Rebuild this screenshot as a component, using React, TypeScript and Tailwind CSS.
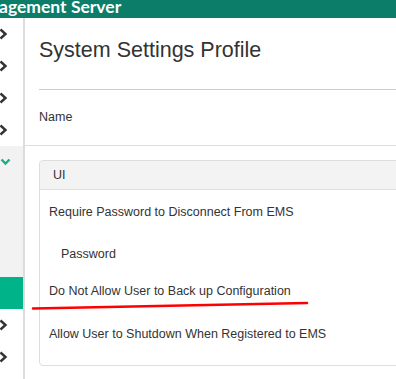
import React from "react";

function ChevronRight() {
  return (
    <svg width="10" height="12" viewBox="0 0 10 12" className="block -ml-[2px]">
      <polyline points="2.5,1.5 7.5,6 2.5,10.5" fill="none" stroke="#333" strokeWidth="2.4" strokeLinecap="butt" strokeLinejoin="miter" />
    </svg>
  );
}

function ChevronDown() {
  return (
    <svg width="12" height="8" viewBox="0 0 12 8" className="block ml-[0px]">
      <polyline points="1.5,1.5 5.5,5.5 9.5,1.5" fill="none" stroke="#1aab88" strokeWidth="2.4" />
    </svg>
  );
}

export default function App() {
  const textFont = { fontFamily: '"Liberation Sans", Arial, sans-serif' };
  return (
    <div className="relative w-[396px] h-[379px] overflow-hidden bg-white" style={textFont}>
      <div className="h-[18px] bg-[#0b7d69] overflow-hidden">
        <div
          className="-ml-[36px] -mt-[3px] text-[17.5px] font-bold text-white leading-[20px] whitespace-nowrap"
          style={{ fontFamily: 'Lato, "Open Sans", sans-serif' }}
        >
          Management Server
        </div>
      </div>
      <div className="flex h-[361px]">
        <div className="w-[25px] shrink-0 border-r-2 border-[#dcdcdc] flex flex-col overflow-hidden">
          <div className="h-[32px] flex items-center">
            <ChevronRight />
          </div>
          <div className="h-[32px] flex items-center">
            <ChevronRight />
          </div>
          <div className="h-[32px] flex items-center">
            <ChevronRight />
          </div>
          <div className="h-[32px] flex items-center">
            <ChevronRight />
          </div>
          <div className="h-[131px] bg-[#f2f2f2] flex flex-col">
            <div className="h-[32px] flex items-center">
              <ChevronDown />
            </div>
          </div>
          <div className="h-[32px] bg-[#00b388]" />
          <div className="h-[32px] flex items-center">
            <ChevronRight />
          </div>
          <div className="h-[32px] flex items-center">
            <ChevronRight />
          </div>
        </div>
        <div className="flex-1 min-w-0 overflow-hidden">
          <div className="ml-[14px] pt-[19px] pb-[26px] border-b border-[#cccccc]">
            <div className="text-[21.5px] leading-[26px] text-[#333]">System Settings Profile</div>
          </div>
          <div className="h-[56px] flex items-center pl-[14px] border-b border-[#dddddd] text-[12.5px] text-[#333]">
            Name
          </div>
          <div className="ml-[14px] mt-[14px] -mr-[20px] border border-[#dddddd] rounded-[4px] text-[12.5px] text-[#333]">
            <div className="h-[29px] bg-[#f3f3f3] border-b border-[#dddddd] rounded-t-[4px] flex items-center pl-[13px]">
              UI
            </div>
            <div className="pl-[9px] pb-[4px]">
              <div className="h-[44px] flex items-center">Require Password to Disconnect From EMS</div>
              <div className="h-[40px] flex items-center pl-[12px]">Password</div>
              <div className="h-[34px] flex items-center">Do Not Allow User to Back up Configuration</div>
              <div className="h-[53px] flex items-center">Allow User to Shutdown When Registered to EMS</div>
            </div>
          </div>
        </div>
      </div>
      <svg className="absolute left-0 top-0 pointer-events-none" width="396" height="379">
        <path d="M33 308.5 Q 170 306 307 303" fill="none" stroke="#ff0000" strokeWidth="2.6" strokeLinecap="round" />
      </svg>
    </div>
  );
}
